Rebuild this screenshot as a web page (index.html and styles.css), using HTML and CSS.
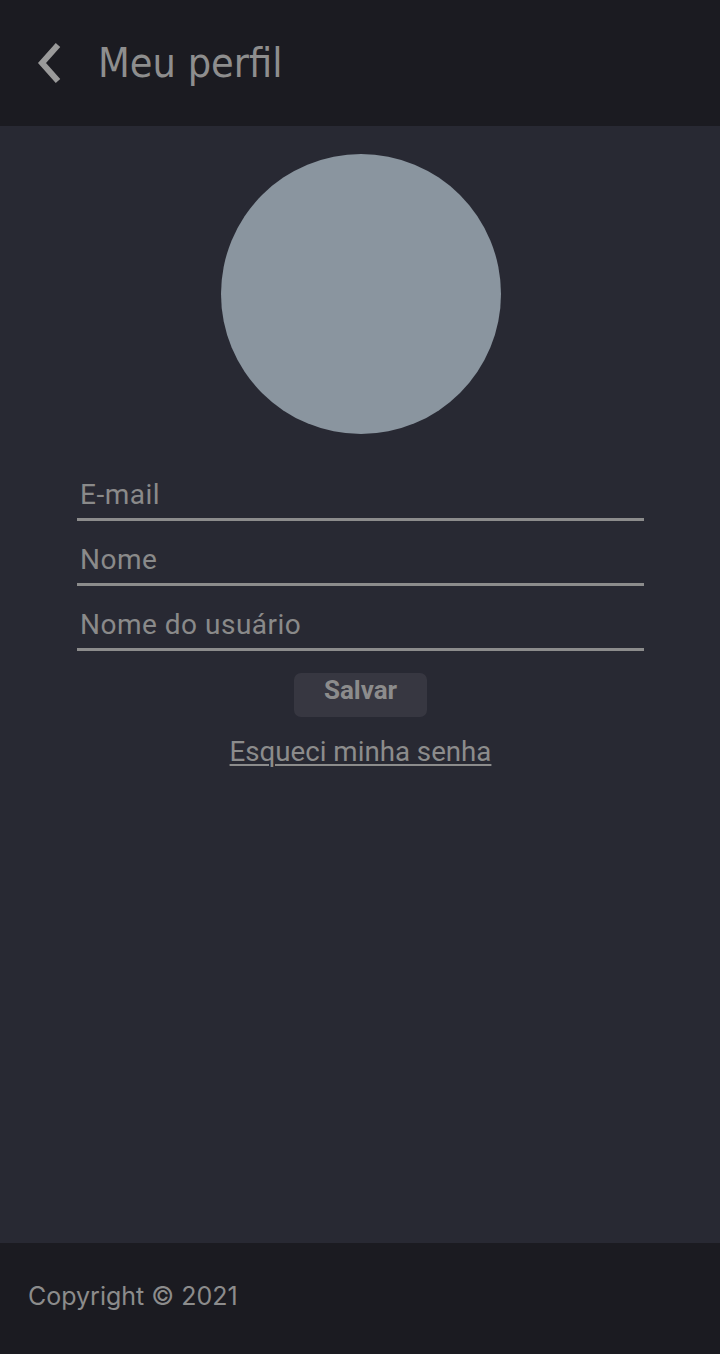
FILE: index.html
```html
<!DOCTYPE html>
<html lang="pt-BR">
<head>
<meta charset="utf-8">
<title>Meu perfil</title>
<link rel="stylesheet" href="styles.css">
</head>
<body>
<div class="app">
  <header class="topbar">
    <a class="back" href="#" aria-label="Voltar">
      <svg width="30" height="44" viewBox="0 0 30 44"><path d="M24 4 L8 22 L24 40" fill="none" stroke="#9a9a9a" stroke-width="6" stroke-linecap="butt" stroke-linejoin="miter"/></svg>
    </a>
    <h1 class="title">Meu perfil</h1>
  </header>
  <main class="content">
    <div class="avatar"></div>
    <form class="form">
      <input class="field" type="email" placeholder="E-mail">
      <input class="field" type="text" placeholder="Nome">
      <input class="field" type="text" placeholder="Nome do usuário">
      <button class="save" type="button">Salvar</button>
      <a class="forgot" href="#">Esqueci minha senha</a>
    </form>
  </main>
  <footer class="footer">Copyright © 2021</footer>
</div>
</body>
</html>
```

FILE: styles.css
```css
* { box-sizing: border-box; }
html, body { margin: 0; padding: 0; }
body {
  background: #282933;
  font-family: Roboto, "Noto Sans", sans-serif;
}
.app {
  display: flex;
  flex-direction: column;
  min-height: 1354px;
}
.topbar {
  height: 126px;
  background: #1b1b21;
  display: flex;
  align-items: center;
  padding-left: 34px;
}
.back {
  display: flex;
  width: 30px;
  height: 44px;
  margin-right: 34px;
}
.title {
  margin: 0;
  font-family: "DejaVu Sans Condensed", "DejaVu Sans", sans-serif;
  font-weight: normal;
  font-size: 41px;
  color: #8e8e8e;
}
.content {
  flex: 1;
  background: #282933;
  display: flex;
  flex-direction: column;
  align-items: center;
  padding-top: 28px;
}
.avatar {
  width: 280px;
  height: 280px;
  border-radius: 50%;
  background: #8a959f;
  margin-left: 2px;
}
.form {
  width: 567px;
  margin-top: 37px;
  margin-left: 1px;
  display: flex;
  flex-direction: column;
  align-items: center;
}
.field {
  width: 100%;
  height: 50px;
  margin-bottom: 15px;
  background: transparent;
  border: none;
  border-bottom: 3px solid #8c8c8c;
  padding: 0 4px 0 3px;
  font-family: Roboto, sans-serif;
  font-size: 28px;
  letter-spacing: 0.5px;
  color: #8c8c8c;
  outline: none;
}
.field:last-of-type { margin-bottom: 22px; }
.field::placeholder { color: #8a8a8a; opacity: 1; }
.save {
  width: 133px;
  height: 44px;
  background: #373741;
  border: none;
  border-radius: 7px;
  font-family: Roboto, sans-serif;
  font-weight: bold;
  font-size: 26px;
  color: #8c8c8c;
  padding: 0 0 10px;
  cursor: pointer;
}
.forgot {
  margin-top: 18px;
  font-family: Roboto, sans-serif;
  font-size: 27.7px;
  color: #8c8c8c;
  text-decoration: underline;
  text-decoration-thickness: 2px;
  text-underline-offset: 3px;
}
.footer {
  height: 111px;
  background: #1b1b21;
  display: flex;
  align-items: center;
  padding-left: 28px;
  padding-bottom: 5px;
  font-family: Inter, Roboto, sans-serif;
  font-size: 25px;
  color: #8c8c8c;
}
```
